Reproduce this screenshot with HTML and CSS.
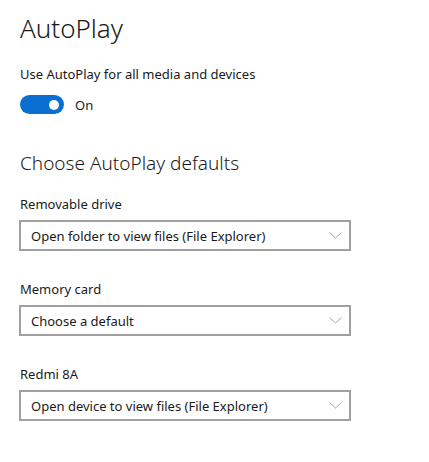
FILE: index.html
```html
<!DOCTYPE html>
<html lang="en">
<head>
  <meta charset="UTF-8">
  <meta name="viewport" content="width=device-width, initial-scale=1.0">
  <title>AutoPlay</title>
  <link rel="stylesheet" href="styles.css">
</head>
<body>
  <div class="page">
    <h1>AutoPlay</h1>
    <p class="label">Use AutoPlay for all media and devices</p>
    <div class="toggle-row">
      <span class="toggle"><span class="knob"></span></span>
      <span class="toggle-text">On</span>
    </div>

    <h2>Choose AutoPlay defaults</h2>

    <div class="field">
      <p class="label">Removable drive</p>
      <div class="select">
        <span>Open folder to view files (File Explorer)</span>
        <svg class="chevron" width="13" height="7" viewBox="0 0 13 7"><path d="M0.5 0.5 L6.5 6 L12.5 0.5" fill="none" stroke="#a8a8a8" stroke-width="1"/></svg>
      </div>
    </div>

    <div class="field">
      <p class="label">Memory card</p>
      <div class="select">
        <span>Choose a default</span>
        <svg class="chevron" width="13" height="7" viewBox="0 0 13 7"><path d="M0.5 0.5 L6.5 6 L12.5 0.5" fill="none" stroke="#a8a8a8" stroke-width="1"/></svg>
      </div>
    </div>

    <div class="field">
      <p class="label">Redmi 8A</p>
      <div class="select">
        <span>Open device to view files (File Explorer)</span>
        <svg class="chevron" width="13" height="7" viewBox="0 0 13 7"><path d="M0.5 0.5 L6.5 6 L12.5 0.5" fill="none" stroke="#a8a8a8" stroke-width="1"/></svg>
      </div>
    </div>
  </div>
</body>
</html>
```

FILE: styles.css
```css
body {
  margin: 0;
  background-color: #fff;
  font-family: "Noto Sans", "Open Sans", sans-serif;
  color: #1a1a1a;
}
.page {
  padding: 10px 20px 0 19px;
  width: 332px;
}
h1 {
  font-size: 26px;
  font-weight: 300;
  margin: 0 0 0 1px;
  line-height: 36px;
}
h2 {
  font-size: 19px;
  font-weight: 300;
  margin: 35px 0 18px 1px;
  line-height: 28px;
}
.label {
  font-size: 13px;
  margin: 0 0 0 1px;
  line-height: 18px;
}
h1 + .label {
  margin-top: 19px;
}
.toggle-row {
  display: flex;
  align-items: center;
  margin: 12px 0 0 1px;
}
.toggle {
  width: 44px;
  height: 19px;
  border-radius: 10px;
  background-color: #0a6fd1;
  display: flex;
  align-items: center;
  justify-content: flex-end;
  padding-right: 5px;
  box-sizing: border-box;
}
.knob {
  width: 10px;
  height: 10px;
  border-radius: 50%;
  background-color: #fff;
}
.toggle-text {
  font-size: 13px;
  margin-left: 11px;
}
.field {
  margin-bottom: 29px;
}
.field .label {
  margin-bottom: 7px;
}
.select {
  height: 31px;
  border: 2px solid #a0a0a0;
  box-sizing: border-box;
  display: flex;
  align-items: center;
  justify-content: space-between;
  padding: 0 7px 0 10px;
  font-size: 13px;
}
```
